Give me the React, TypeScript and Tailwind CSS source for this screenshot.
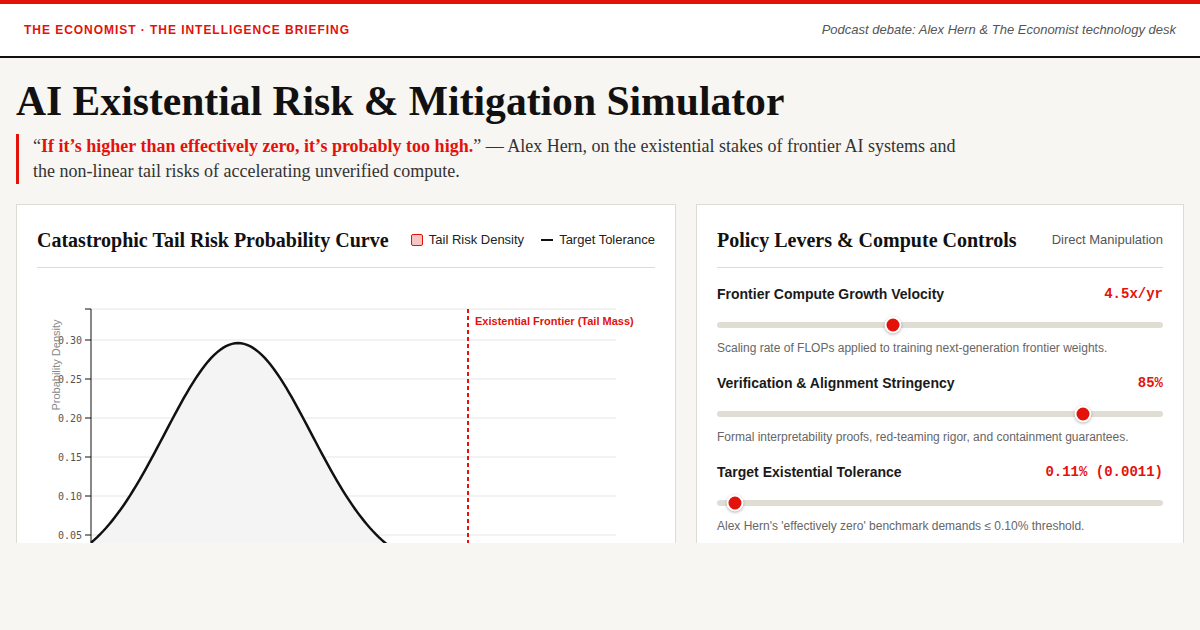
import React from "react";

const RED = "#e3120b";

function Curve() {
  const x0 = 54;
  const x1 = 579;
  const zeroY = 285;
  const scale = 780; // px per unit density
  const mu = 201;
  const sigma = 73.5;
  const peak = 0.296;
  const pts: string[] = [];
  for (let x = x0; x <= x1; x += 3) {
    const v = peak * Math.exp(-((x - mu) * (x - mu)) / (2 * sigma * sigma));
    pts.push(`${x.toFixed(1)},${(zeroY - v * scale).toFixed(2)}`);
  }
  const line = "M" + pts.join(" L");
  const area = line + ` L${x1},${zeroY} L${x0},${zeroY} Z`;
  const ticks = [0.3, 0.25, 0.2, 0.15, 0.1, 0.05];
  return (
    <svg width={618} height={258} className="block">
      <line x1={x0} x2={x1} y1={20} y2={20} stroke="#e5e5e5" strokeWidth={1} />
      {ticks.map((t) => {
        const y = zeroY - t * scale;
        return (
          <g key={t}>
            <line x1={x0} x2={x1} y1={y} y2={y} stroke="#e5e5e5" strokeWidth={1} />
            <line x1={x0 - 6} x2={x0} y1={y} y2={y} stroke="#111" strokeWidth={1} />
            <text
              x={x0 - 9}
              y={y + 3.5}
              textAnchor="end"
              fontSize={10}
              fill="#555"
              fontFamily="'DejaVu Sans Mono', monospace"
            >
              {t.toFixed(2)}
            </text>
          </g>
        );
      })}
      <path d={`M${x0 - 6},20 H${x0} V${zeroY} H${x0 - 6}`} fill="none" stroke="#111" strokeWidth={1} />
      <path d={area} fill="#f4f4f4" />
      <path d={line} fill="none" stroke="#111" strokeWidth={2.5} />
      <line x1={431} x2={431} y1={20} y2={zeroY} stroke={RED} strokeWidth={2} strokeDasharray="4 3" />
      <text
        x={438}
        y={36}
        fontSize={11}
        fontWeight={700}
        fill={RED}
        fontFamily="'Liberation Sans', Arial, sans-serif"
      >
        Existential Frontier (Tail Mass)
      </text>
      <text
        transform="rotate(-90)"
        x={-76}
        y={23}
        textAnchor="middle"
        fontSize={11}
        fill="#888"
        fontFamily="'Liberation Sans', Arial, sans-serif"
      >
        Probability Density
      </text>
    </svg>
  );
}

function Slider({
  label,
  value,
  thumb,
  desc,
}: {
  label: string;
  value: string;
  thumb: number;
  desc: string;
}) {
  return (
    <div className="flex flex-col">
      <div className="flex items-center justify-between h-[18px] pt-[1px]">
        <span className="text-[14px] font-bold text-[#1a1a1a]">{label}</span>
        <span className="text-[14px] font-bold text-[#e3120b] font-['Liberation_Mono',monospace]">{value}</span>
      </div>
      <div className="relative mt-[19px] h-[6px] rounded-full bg-[#e0ddd4]">
        <div
          className="absolute top-1/2 h-[17px] w-[17px] -translate-x-1/2 -translate-y-1/2 rounded-full border-2 border-white bg-[#e3120b] shadow-[0_1px_3px_rgba(0,0,0,0.3)]"
          style={{ left: `${thumb}px` }}
        />
      </div>
      <p className="mt-[12px] text-[12px] leading-[16px] text-[#666]">{desc}</p>
    </div>
  );
}

export default function App() {
  return (
    <div className="h-[630px] overflow-hidden bg-[#f7f6f2] font-['Liberation_Sans',Arial,sans-serif]">
      <div className="h-[4px] bg-[#e3120b]" />
      <header className="flex h-[54px] items-center justify-between border-b-2 border-[#111] bg-white px-6">
        <span className="text-[12px] font-bold uppercase tracking-[0.08em] text-[#e3120b]">
          The Economist · The Intelligence Briefing
        </span>
        <span className="text-[13px] italic text-[#555]">
          Podcast debate: Alex Hern &amp; The Economist technology desk
        </span>
      </header>

      <main className="px-4">
        <h1 className="mt-[20px] font-['Liberation_Serif','Times_New_Roman',serif] text-[41.6px] font-bold leading-[46px] text-[#111]">
          AI Existential Risk &amp; Mitigation Simulator
        </h1>
        <blockquote className="mt-[10px] max-w-[952px] border-l-[3px] border-[#e3120b] pl-[14px] font-['Liberation_Serif','Times_New_Roman',serif] text-[18px] leading-[25px] text-[#333]">
          “<strong className="font-bold text-[#e3120b]">If it’s higher than effectively zero, it’s probably too high.</strong>” — Alex Hern, on the existential stakes of frontier AI systems and the non-linear tail risks of accelerating unverified compute.
        </blockquote>

        <div className="mt-[20px] h-[339px] overflow-hidden">
          <div className="grid grid-cols-[660px_488px] items-start gap-5">
            <section className="h-[420px] border border-[#dedbd3] bg-white px-5 pt-[20px]">
              <div className="flex h-[30px] items-center justify-between">
                <h2 className="whitespace-nowrap font-['Liberation_Serif','Times_New_Roman',serif] text-[20px] font-bold text-[#111]">
                  Catastrophic Tail Risk Probability Curve
                </h2>
                <div className="flex items-center gap-[17px] whitespace-nowrap text-[13px] text-[#222]">
                  <span className="flex items-center gap-[6px]">
                    <span className="inline-block h-[12px] w-[12px] rounded-[2px] border border-[#e3120b] bg-[#f7c6c4]" />
                    Tail Risk Density
                  </span>
                  <span className="flex items-center gap-[6px]">
                    <span className="inline-block h-[2px] w-[12px] bg-[#111]" />
                    Target Tolerance
                  </span>
                </div>
              </div>
              <div className="mt-[12px] border-t border-[#dedbd3]" />
              <div className="mt-[21px]">
                <Curve />
              </div>
            </section>

            <section className="h-[420px] border border-[#dedbd3] bg-white px-5 pt-[20px]">
              <div className="flex h-[30px] items-center justify-between">
                <h2 className="whitespace-nowrap font-['Liberation_Serif','Times_New_Roman',serif] text-[20px] font-bold text-[#111]">
                  Policy Levers &amp; Compute Controls
                </h2>
                <span className="whitespace-nowrap text-[13px] text-[#555]">Direct Manipulation</span>
              </div>
              <div className="mt-[12px] border-t border-[#dedbd3]" />
              <div className="mt-[17px] flex flex-col gap-[18px]">
                <Slider
                  label="Frontier Compute Growth Velocity"
                  value="4.5x/yr"
                  thumb={176}
                  desc="Scaling rate of FLOPs applied to training next-generation frontier weights."
                />
                <Slider
                  label="Verification & Alignment Stringency"
                  value="85%"
                  thumb={366}
                  desc="Formal interpretability proofs, red-teaming rigor, and containment guarantees."
                />
                <Slider
                  label="Target Existential Tolerance"
                  value="0.11% (0.0011)"
                  thumb={18}
                  desc="Alex Hern's 'effectively zero' benchmark demands ≤ 0.10% threshold."
                />
              </div>
            </section>
          </div>
        </div>
      </main>
    </div>
  );
}
